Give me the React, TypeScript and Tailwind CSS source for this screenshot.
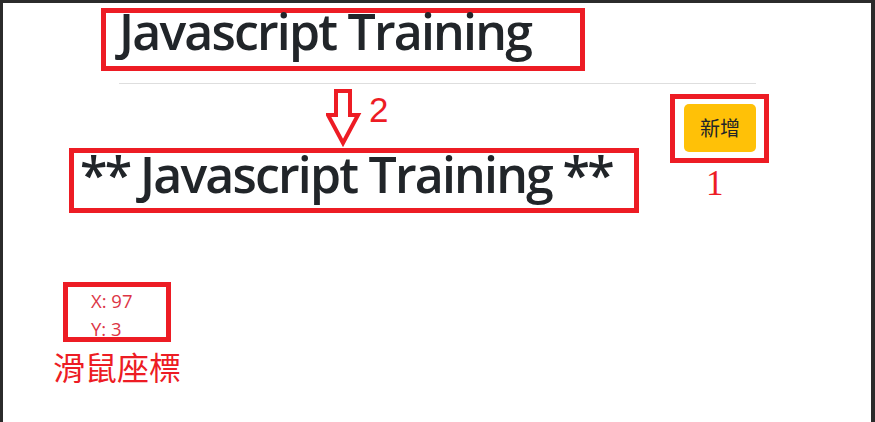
import React from 'react'

const RED = 'border-[#ed1c24]'

function DownArrow() {
  return (
    <svg width="36" height="60" viewBox="0 0 36 60" fill="none">
      <polygon
        points="10,3 24,3 24,27 32,27 17,55 2,27 10,27"
        stroke="#ed1c24"
        strokeWidth="4"
        strokeLinejoin="miter"
        fill="none"
      />
    </svg>
  )
}

export default function App() {
  return (
    <div className="relative h-[422px] w-[875px] overflow-hidden border-l-[3px] border-r-[4px] border-t-[3px] border-[#2b2b2b] bg-white font-['Open_Sans','Noto_Sans',sans-serif] text-[#212529]">
      {/* page title */}
      <div className={`ml-[98px] mt-[5px] h-[63px] w-[484px] border-[5px] ${RED} pl-[13px]`}>
        <h1 className="-mt-[4px] text-[50px] font-semibold leading-[44px] tracking-[-1.8px]">Javascript Training</h1>
      </div>

      <hr className="ml-[116px] mt-[12px] w-[637px] border-t border-[#dedede]" />

      <div className="flex items-start">
        <div className={`ml-[66px] mt-[64px] h-[65px] w-[570px] border-[5px] ${RED} pl-[6px]`}>
          <h1 className="-mt-[1px] whitespace-nowrap text-[50px] font-semibold leading-[44px] tracking-[-1.8px]">
            <span className="tracking-[-2.6px]">** </span>Javascript Training<span className="tracking-[-2.6px]"> **</span>
          </h1>
        </div>

        <div className={`ml-[31px] mt-[10px] h-[69px] w-[99px] border-[5px] ${RED} pl-[9px] pt-[5px]`}>
          <button className="flex h-[48px] w-[72px] items-center justify-center rounded-[5px] bg-[#ffc107] font-['Noto_Sans_CJK_TC',sans-serif] text-[20px] font-normal text-[#212529]">
            新增
          </button>
        </div>
      </div>

      {/* mouse position */}
      <div className={`ml-[60px] mt-[69px] h-[60px] w-[108px] border-[5px] ${RED} pl-[23px] text-[18.5px] leading-[28px] text-[#dc3545]`}>
        <div>X: 97</div>
        <div>Y: 3</div>
      </div>
      <div className="ml-[50px] mt-[6px] font-['Noto_Sans_CJK_TC',sans-serif] text-[32px] leading-[36px] text-[#ed1c24]">
        滑鼠座標
      </div>

      {/* annotations */}
      <div className="absolute left-[323px] top-[85px]">
        <DownArrow />
      </div>
      <span className="absolute left-[366px] top-[89px] font-['Liberation_Sans',sans-serif] text-[35px] leading-none text-[#ed1c24]">
        2
      </span>
      <span className="absolute left-[703px] top-[163px] font-['Liberation_Serif',serif] text-[35px] leading-none text-[#ed1c24]">
        1
      </span>
    </div>
  )
}
